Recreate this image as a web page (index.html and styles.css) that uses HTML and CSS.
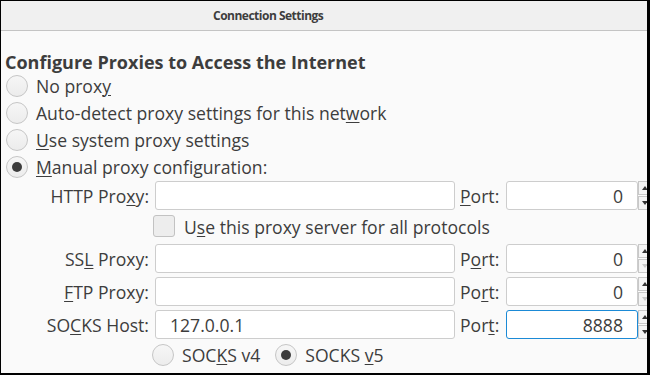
FILE: index.html
```html
<!DOCTYPE html>
<html lang="en">
<head>
    <meta charset="UTF-8">
    <title>Connection Settings</title>
    <link rel="stylesheet" href="styles.css">
</head>
<body>
    <div class="window">
        <div class="titlebar">Connection Settings</div>
        <div class="content">
            <h1>Configure Proxies to Access the Internet</h1>
            <div class="choices">
                <label class="choice"><span class="radio"></span><span>No prox<u>y</u></span></label>
                <label class="choice"><span class="radio"></span><span>Auto-detect proxy settings for this net<u>w</u>ork</span></label>
                <label class="choice"><span class="radio"></span><span><u>U</u>se system proxy settings</span></label>
                <label class="choice"><span class="radio on"></span><span><u>M</u>anual proxy configuration:</span></label>
            </div>
            <div class="fields">
                <span class="name"><span>HTTP Pro<u>x</u>y:</span></span>
                <span class="input host"></span>
                <span class="port"><span><u>P</u>ort:</span></span>
                <span class="input num">0<span class="spin"><i class="up"></i><i class="down"></i></span></span>

                <label class="check-row"><span class="check"></span><span>U<u>s</u>e this proxy server for all protocols</span></label>

                <span class="name"><span>SS<u>L</u> Proxy:</span></span>
                <span class="input host"></span>
                <span class="port"><span>P<u>o</u>rt:</span></span>
                <span class="input num">0<span class="spin"><i class="up"></i><i class="down off"></i></span></span>

                <span class="name"><span><u>F</u>TP Proxy:</span></span>
                <span class="input host"></span>
                <span class="port"><span>Po<u>r</u>t:</span></span>
                <span class="input num">0<span class="spin"><i class="up"></i><i class="down off"></i></span></span>

                <span class="name"><span>SO<u>C</u>KS Host:</span></span>
                <span class="input host">127.0.0.1</span>
                <span class="port"><span>Por<u>t</u>:</span></span>
                <span class="input num focus">8888<span class="spin"><i class="up"></i><i class="down"></i></span></span>

                <div class="socks-row">
                    <label class="choice"><span class="radio"></span><span>SOC<u>K</u>S v4</span></label>
                    <label class="choice"><span class="radio on"></span><span>SOCKS <u>v</u>5</span></label>
                </div>
            </div>
        </div>
    </div>
</body>
</html>
```

FILE: styles.css
```css
body{
    margin:0;
    padding:0;
    background:#000;
}
.window{
    width:646px;
    height:372px;
    border-left:1px solid #000;
    border-right:3px solid #000;
    border-top:1px solid #000;
    border-bottom:2px solid #000;
    background:#fafafa;
    overflow:hidden;
    font-family:"Open Sans", sans-serif;
    color:#3d3d3d;
}
.titlebar{
    height:29px;
    line-height:29px;
    background:#f0f0f0;
    border-bottom:1px solid #c4c4c4;
    font-size:12px;
    letter-spacing:-0.5px;
    font-weight:bold;
    padding-left:212px;
}
.content{
    padding-top:19px;
}
h1{
    margin:0 0 0 4px;
    font-size:18px;
    line-height:24px;
    font-weight:bold;
}
u{
    text-decoration-thickness:1px;
    text-underline-offset:2px;
}
.choices{
    padding-left:5px;
    margin-top:-2px;
}
.choice{
    display:flex;
    align-items:center;
    height:27px;
    font-size:17.6px;
    gap:8px;
}
.radio{
    width:20px;
    height:20px;
    border:1px solid #c6c6c6;
    border-radius:50%;
    background:linear-gradient(#f6f6f6,#ececec);
    display:flex;
    align-items:center;
    justify-content:center;
    flex-shrink:0;
}
.radio.on::after{
    content:"";
    width:10px;
    height:10px;
    border-radius:50%;
    background:#3d3d3d;
}
.fields{
    display:grid;
    grid-template-columns:151px 303px 46px 145px;
    grid-template-rows:29px 26px 29px 29px 29px 24px;
    row-gap:4px;
    margin-top:1px;
    font-size:17.6px;
    width:700px;
}
.name{
    display:flex;
    align-items:center;
    justify-content:flex-end;
    padding-right:3px;
}
.port{
    display:flex;
    align-items:center;
    padding-left:5px;
}
.input{
    box-sizing:border-box;
    height:29px;
    border:1px solid #cdcdcd;
    border-radius:3px;
    background:#fff;
    display:flex;
    align-items:center;
    padding:0 14px;
    position:relative;
}
.host{
    margin-left:3px;
    width:300px;
}
.num{
    justify-content:flex-end;
    width:132px;
    margin-left:5px;
}
.focus{
    border-color:#1b8ad6;
}
.spin{
    position:absolute;
    left:131px;
    top:-1px;
    width:14px;
    display:flex;
    flex-direction:column;
}
.spin i{
    box-sizing:border-box;
    height:14px;
    border:1px solid #c8c8c8;
    background:#f4f4f4;
    display:flex;
    align-items:center;
    justify-content:center;
}
.spin i + i{
    margin-top:1px;
}
.spin i::after{
    content:"";
    border-left:3px solid transparent;
    border-right:3px solid transparent;
}
.spin .up::after{
    border-bottom:4px solid #333;
}
.spin .down::after{
    border-top:4px solid #333;
}
.spin .down.off::after{
    border-top-color:#c8c8c8;
}
.check-row{
    grid-column:2 / 5;
    align-self:start;
    height:26px;
    display:flex;
    align-items:center;
    gap:9px;
    margin-left:1px;
}
.check{
    width:20px;
    height:20px;
    border:1px solid #c2c2c2;
    border-radius:3px;
    background:#ededed;
    margin-top:-2px;
}
.socks-row{
    grid-column:2 / 5;
    display:flex;
    gap:15px;
}
.socks-row .choice{
    height:24px;
}
```
